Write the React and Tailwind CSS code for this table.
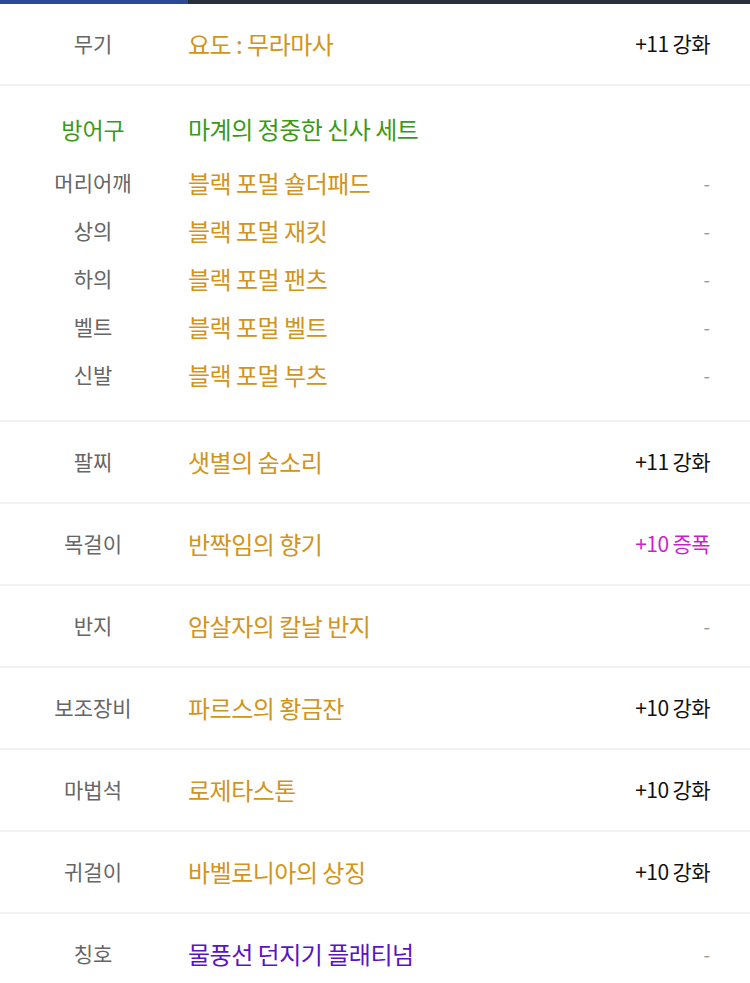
const font = { fontFamily: '"Noto Sans CJK KR", "Noto Sans", sans-serif' };

const items = [
  { slot: '팔찌', name: '샛별의 숨소리', extra: '+11 강화' },
  { slot: '목걸이', name: '반짝임의 향기', extra: '+10 증폭', amp: true },
  { slot: '반지', name: '암살자의 칼날 반지' },
  { slot: '보조장비', name: '파르스의 황금잔', extra: '+10 강화' },
  { slot: '마법석', name: '로제타스톤', extra: '+10 강화' },
  { slot: '귀걸이', name: '바벨로니아의 상징', extra: '+10 강화' },
];

const armor = [
  { slot: '머리어깨', name: '블랙 포멀 숄더패드' },
  { slot: '상의', name: '블랙 포멀 재킷' },
  { slot: '하의', name: '블랙 포멀 팬츠' },
  { slot: '벨트', name: '블랙 포멀 벨트' },
  { slot: '신발', name: '블랙 포멀 부츠' },
];

function Extra({ text, amp }) {
  if (!text) return <span className="text-[19px] text-[#999]">-</span>;
  return (
    <span className={amp ? 'text-[21px] text-[#cc1fcc] tracking-[-0.6px]' : 'text-[21px] text-[#111] tracking-[-0.6px]'}>
      {text}
    </span>
  );
}

function Row({ slot, name, extra, amp, nameColor = 'text-[#d2941a]', last }) {
  return (
    <div className={last ? 'h-[80px] flex items-center' : 'h-[82px] flex items-center border-b-2 border-[#f2f2f2]'}>
      <div className="w-[188px] pr-[2px] text-center text-[21px] text-[#666]">{slot}</div>
      <div className={`flex-1 text-[24px] ${nameColor} tracking-[-0.5px]`}>{name}</div>
      <div className="pr-[40px]">
        <Extra text={extra} amp={amp} />
      </div>
    </div>
  );
}

export default function App() {
  return (
    <div className="w-[750px] bg-white" style={font}>
      <div className="h-[4px] flex">
        <div className="w-[188px] bg-[#2c4a94]" />
        <div className="flex-1 bg-[#2a2f3c]" />
      </div>

      <Row slot="무기" name="요도 : 무라마사" extra="+11 강화" />

      <div className="pt-[20px] pb-[21px] border-b-2 border-[#f2f2f2]">
        <div className="h-[46px] flex items-center">
          <div className="w-[188px] pr-[2px] text-center text-[23px] text-[#3a9a18]">방어구</div>
          <div className="flex-1 text-[24px] text-[#3a9a18] tracking-[-0.5px]">마계의 정중한 신사 세트</div>
        </div>
        <div className="mt-[7px]">
          {armor.map((a) => (
            <div key={a.slot} className="h-[48px] flex items-center">
              <div className="w-[188px] pr-[2px] text-center text-[21px] text-[#666]">{a.slot}</div>
              <div className="flex-1 text-[24px] text-[#d2941a] tracking-[-0.5px]">{a.name}</div>
              <div className="pr-[40px]">
                <Extra />
              </div>
            </div>
          ))}
        </div>
      </div>

      {items.map((it) => (
        <Row key={it.slot} {...it} />
      ))}

      <Row slot="칭호" name="물풍선 던지기 플래티넘" nameColor="text-[#5a12c4]" last />
    </div>
  );
}
